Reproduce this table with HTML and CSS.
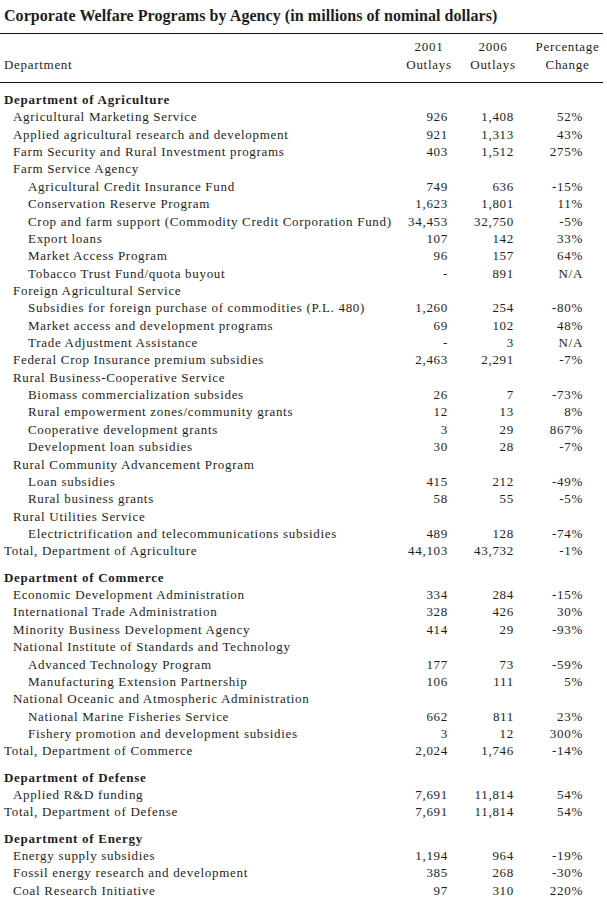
FILE: index.html
```html
<!DOCTYPE html>
<html>
<head>
<meta charset="utf-8">
<link rel="stylesheet" href="styles.css">
</head>
<body>
<h1 class="title">Corporate Welfare Programs by Agency (in millions of nominal dollars)</h1>
<table class="tbl">
<thead>
<tr class="head">
<th class="c-label">Department</th>
<th class="c-a">2001<br>Outlays</th>
<th class="c-b">2006<br>Outlays</th>
<th class="c-c">Percentage<br>Change</th>
</tr>
</thead>
<tbody>
<tr class="dept first"><td class="c-label" colspan="4">Department of Agriculture</td></tr>
<tr><td class="c-label l1">Agricultural Marketing Service</td><td class="n-a">926</td><td class="n-b">1,408</td><td class="n-c">52%</td></tr>
<tr><td class="c-label l1">Applied agricultural research and development</td><td class="n-a">921</td><td class="n-b">1,313</td><td class="n-c">43%</td></tr>
<tr><td class="c-label l1">Farm Security and Rural Investment programs</td><td class="n-a">403</td><td class="n-b">1,512</td><td class="n-c">275%</td></tr>
<tr><td class="c-label l1" colspan="4">Farm Service Agency</td></tr>
<tr><td class="c-label l2">Agricultural Credit Insurance Fund</td><td class="n-a">749</td><td class="n-b">636</td><td class="n-c">-15%</td></tr>
<tr><td class="c-label l2">Conservation Reserve Program</td><td class="n-a">1,623</td><td class="n-b">1,801</td><td class="n-c">11%</td></tr>
<tr><td class="c-label l2">Crop and farm support (Commodity Credit Corporation Fund)</td><td class="n-a">34,453</td><td class="n-b">32,750</td><td class="n-c">-5%</td></tr>
<tr><td class="c-label l2">Export loans</td><td class="n-a">107</td><td class="n-b">142</td><td class="n-c">33%</td></tr>
<tr><td class="c-label l2">Market Access Program</td><td class="n-a">96</td><td class="n-b">157</td><td class="n-c">64%</td></tr>
<tr><td class="c-label l2">Tobacco Trust Fund/quota buyout</td><td class="n-a">-</td><td class="n-b">891</td><td class="n-c">N/A</td></tr>
<tr><td class="c-label l1" colspan="4">Foreign Agricultural Service</td></tr>
<tr><td class="c-label l2">Subsidies for foreign purchase of commodities (P.L. 480)</td><td class="n-a">1,260</td><td class="n-b">254</td><td class="n-c">-80%</td></tr>
<tr><td class="c-label l2">Market access and development programs</td><td class="n-a">69</td><td class="n-b">102</td><td class="n-c">48%</td></tr>
<tr><td class="c-label l2">Trade Adjustment Assistance</td><td class="n-a">-</td><td class="n-b">3</td><td class="n-c">N/A</td></tr>
<tr><td class="c-label l1">Federal Crop Insurance premium subsidies</td><td class="n-a">2,463</td><td class="n-b">2,291</td><td class="n-c">-7%</td></tr>
<tr><td class="c-label l1" colspan="4">Rural Business-Cooperative Service</td></tr>
<tr><td class="c-label l2">Biomass commercialization subsides</td><td class="n-a">26</td><td class="n-b">7</td><td class="n-c">-73%</td></tr>
<tr><td class="c-label l2">Rural empowerment zones/community grants</td><td class="n-a">12</td><td class="n-b">13</td><td class="n-c">8%</td></tr>
<tr><td class="c-label l2">Cooperative development grants</td><td class="n-a">3</td><td class="n-b">29</td><td class="n-c">867%</td></tr>
<tr><td class="c-label l2">Development loan subsidies</td><td class="n-a">30</td><td class="n-b">28</td><td class="n-c">-7%</td></tr>
<tr><td class="c-label l1" colspan="4">Rural Community Advancement Program</td></tr>
<tr><td class="c-label l2">Loan subsidies</td><td class="n-a">415</td><td class="n-b">212</td><td class="n-c">-49%</td></tr>
<tr><td class="c-label l2">Rural business grants</td><td class="n-a">58</td><td class="n-b">55</td><td class="n-c">-5%</td></tr>
<tr><td class="c-label l1" colspan="4">Rural Utilities Service</td></tr>
<tr><td class="c-label l2">Electrictrification and telecommunications subsidies</td><td class="n-a">489</td><td class="n-b">128</td><td class="n-c">-74%</td></tr>
<tr class="total"><td class="c-label">Total, Department of Agriculture</td><td class="n-a">44,103</td><td class="n-b">43,732</td><td class="n-c">-1%</td></tr>

<tr class="dept"><td class="c-label" colspan="4">Department of Commerce</td></tr>
<tr><td class="c-label l1">Economic Development Administration</td><td class="n-a">334</td><td class="n-b">284</td><td class="n-c">-15%</td></tr>
<tr><td class="c-label l1">International Trade Administration</td><td class="n-a">328</td><td class="n-b">426</td><td class="n-c">30%</td></tr>
<tr><td class="c-label l1">Minority Business Development Agency</td><td class="n-a">414</td><td class="n-b">29</td><td class="n-c">-93%</td></tr>
<tr><td class="c-label l1" colspan="4">National Institute of Standards and Technology</td></tr>
<tr><td class="c-label l2">Advanced Technology Program</td><td class="n-a">177</td><td class="n-b">73</td><td class="n-c">-59%</td></tr>
<tr><td class="c-label l2">Manufacturing Extension Partnership</td><td class="n-a">106</td><td class="n-b">111</td><td class="n-c">5%</td></tr>
<tr><td class="c-label l1" colspan="4">National Oceanic and Atmospheric Administration</td></tr>
<tr><td class="c-label l2">National Marine Fisheries Service</td><td class="n-a">662</td><td class="n-b">811</td><td class="n-c">23%</td></tr>
<tr><td class="c-label l2">Fishery promotion and development subsidies</td><td class="n-a">3</td><td class="n-b">12</td><td class="n-c">300%</td></tr>
<tr class="total"><td class="c-label">Total, Department of Commerce</td><td class="n-a">2,024</td><td class="n-b">1,746</td><td class="n-c">-14%</td></tr>

<tr class="dept"><td class="c-label" colspan="4">Department of Defense</td></tr>
<tr><td class="c-label l1">Applied R&amp;D funding</td><td class="n-a">7,691</td><td class="n-b">11,814</td><td class="n-c">54%</td></tr>
<tr class="total"><td class="c-label">Total, Department of Defense</td><td class="n-a">7,691</td><td class="n-b">11,814</td><td class="n-c">54%</td></tr>

<tr class="dept"><td class="c-label" colspan="4">Department of Energy</td></tr>
<tr><td class="c-label l1">Energy supply subsidies</td><td class="n-a">1,194</td><td class="n-b">964</td><td class="n-c">-19%</td></tr>
<tr><td class="c-label l1">Fossil energy research and development</td><td class="n-a">385</td><td class="n-b">268</td><td class="n-c">-30%</td></tr>
<tr><td class="c-label l1">Coal Research Initiative</td><td class="n-a">97</td><td class="n-b">310</td><td class="n-c">220%</td></tr>
</tbody>
</table>
</body>
</html>
```

FILE: styles.css
```css
html, body {
  margin: 0;
  padding: 0;
  background: #ffffff;
}
body {
  font-family: "Liberation Serif", "Times New Roman", serif;
  color: #1e1e1e;
  font-size: 13px;
}
.title {
  font-size: 16px;
  font-weight: bold;
  letter-spacing: 0.06px;
  margin: 0;
  padding: 6px 0 0 4px;
  line-height: 20px;
  height: 27px;
}
.tbl {
  width: 603px;
  border-collapse: collapse;
  border-spacing: 0;
  letter-spacing: 0.7px;
}
.tbl td, .tbl th {
  padding: 0;
  line-height: 17.36px;
  white-space: nowrap;
}
.tbl .head th {
  font-weight: normal;
  vertical-align: bottom;
  line-height: 18px;
  padding-top: 4px;
  padding-bottom: 8px;
  border-top: 1.5px solid #111;
  border-bottom: 1.5px solid #111;
}
.tbl .c-label { text-align: left; padding-left: 4px; }
.tbl .c-a { width: 54px; text-align: center; }
.tbl .c-b { width: 74px; text-align: center; }
.tbl .c-c { width: 71px; text-align: center; padding-left: 2px; }
.tbl .l1 { padding-left: 13px; }
.tbl .l2 { padding-left: 28px; }
.tbl .n-a { text-align: right; padding-right: 8px; }
.tbl .n-b { text-align: right; padding-right: 16px; }
.tbl .n-c { text-align: right; padding-right: 20px; }
.tbl .dept td {
  font-weight: bold;
  padding-top: 9px;
}
.tbl .dept.first td { padding-top: 8px; }
```
